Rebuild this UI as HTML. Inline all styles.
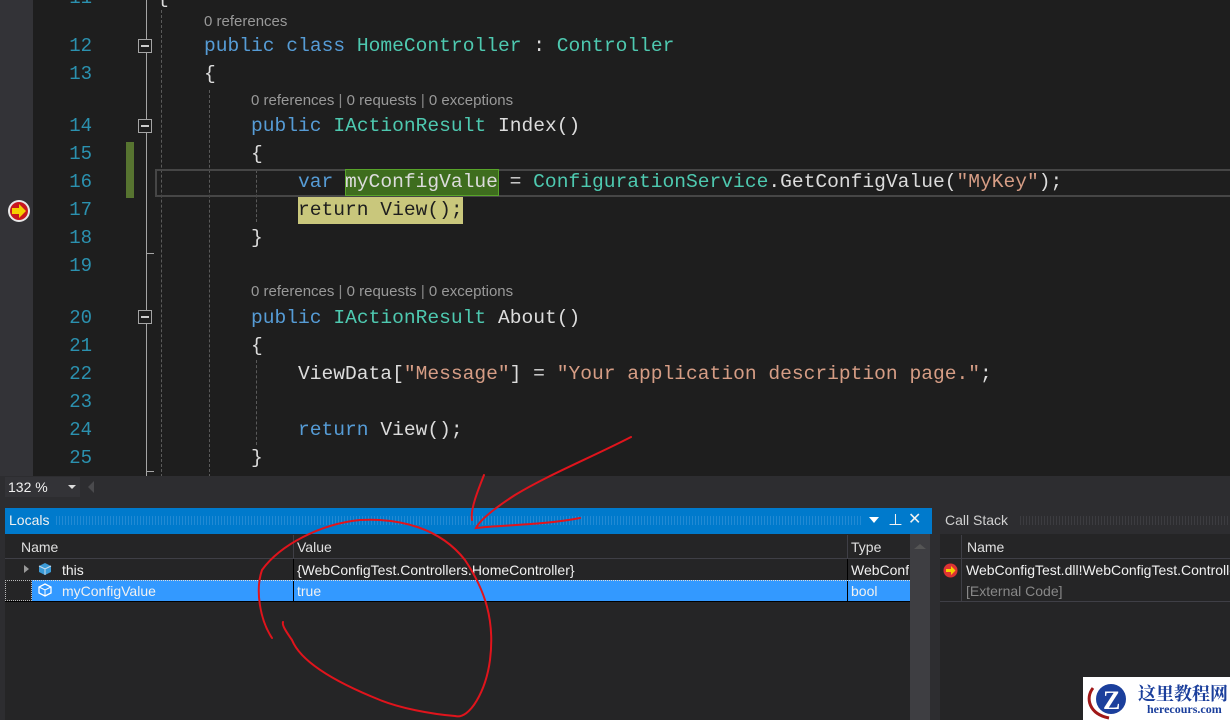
<!DOCTYPE html>
<html><head><meta charset="utf-8"><style>
*{margin:0;padding:0;box-sizing:border-box}
body{width:1230px;height:720px;overflow:hidden;background:#1e1e1e;position:relative;font-family:"Liberation Sans","Noto Sans CJK SC",sans-serif}
.ab{position:absolute}
.code{position:absolute;font-family:"Liberation Mono",monospace;font-size:19.6px;white-space:pre;color:#dcdcdc;line-height:28px}
.ln{position:absolute;left:40px;width:52px;text-align:right;font-family:"Liberation Mono",monospace;font-size:19px;color:#2b91af;line-height:28px}
.cl{position:absolute;font-size:15px;color:#999;white-space:pre;line-height:20px}
.k{color:#569cd6}.t{color:#4ec9b0}.s{color:#d69d85}
.dash{position:absolute;width:0;border-left:1px dashed #5a5a5a}
.box{position:absolute;left:138px;width:14px;height:14px;border:1px solid #a5a5a5;background:#1e1e1e}
.box::after{content:"";position:absolute;left:2px;top:5px;width:8px;height:2px;background:#ccc}
.ui{font-size:14px;color:#f1f1f1;white-space:pre;position:absolute}
</style></head><body>
<!-- left margin -->
<div class="ab" style="left:0;top:0;width:33px;height:477px;background:#333337"></div>
<!-- outline line -->
<div class="ab" style="left:146px;top:0;width:1px;height:477px;background:#a5a5a5"></div>
<div class="ab" style="left:146px;top:253px;width:8px;height:1px;background:#a5a5a5"></div>
<div class="ab" style="left:146px;top:471px;width:8px;height:1px;background:#a5a5a5"></div>
<div class="box" style="top:39px"></div>
<div class="box" style="top:119px"></div>
<div class="box" style="top:310px"></div>
<!-- change markers -->
<div class="ab" style="left:126px;top:142px;width:8px;height:56px;background:#577430"></div>
<!-- guides -->
<div class="dash" style="left:161px;top:10px;height:467px"></div>
<div class="dash" style="left:209px;top:90px;height:387px"></div>
<div class="dash" style="left:256px;top:170px;height:52px"></div>
<div class="dash" style="left:256px;top:360px;height:85px"></div>
<!-- current line box -->
<div class="ab" style="left:155px;top:169px;width:1080px;height:28px;border:2px solid #464646"></div>
<!-- breakpoint arrow -->
<svg class="ab" style="left:7px;top:199px" width="24" height="24"><circle cx="12" cy="12" r="11" fill="#e8e8e8"/><circle cx="12" cy="12" r="9" fill="#c8171e"/><path d="M5 9h7V5l7 7-7 7v-4H5z" fill="#f5d000"/></svg>

<div class="ln" style="top:-16px">11</div>
<div class="code" style="left:157px;top:-16px">{</div>
<div class="cl" style="left:204px;top:12px">0 references</div>
<div class="ln" style="top:32px">12</div>
<div class="code" style="left:204px;top:32px"><span class="k">public class</span> <span class="t">HomeController</span> : <span class="t">Controller</span></div>
<div class="ln" style="top:60px">13</div>
<div class="code" style="left:204px;top:60px">{</div>
<div class="cl" style="left:251px;top:91px">0 references <span style="color:#888">|</span> 0 requests <span style="color:#888">|</span> 0 exceptions</div>
<div class="ln" style="top:112px">14</div>
<div class="code" style="left:251px;top:112px"><span class="k">public</span> <span class="t">IActionResult</span> Index()</div>
<div class="ln" style="top:140px">15</div>
<div class="code" style="left:251px;top:140px">{</div>
<div class="ln" style="top:168px">16</div>
<div class="ab" style="left:345px;top:169px;width:154px;height:27px;background:#3e6d1e;border:1px solid #58a32a"></div>
<div class="code" style="left:298px;top:168px"><span class="k">var</span> myConfigValue = <span class="t">ConfigurationService</span>.GetConfigValue(<span class="s">"MyKey"</span>);</div>
<div class="ln" style="top:196px">17</div>
<div class="ab" style="left:298px;top:197px;width:165px;height:27px;background:#c9c77c"></div>
<div class="code" style="left:298px;top:196px;color:#1e1e1e">return View();</div>
<div class="ln" style="top:224px">18</div>
<div class="code" style="left:251px;top:224px">}</div>
<div class="ln" style="top:252px">19</div>
<div class="cl" style="left:251px;top:282px">0 references <span style="color:#888">|</span> 0 requests <span style="color:#888">|</span> 0 exceptions</div>
<div class="ln" style="top:304px">20</div>
<div class="code" style="left:251px;top:304px"><span class="k">public</span> <span class="t">IActionResult</span> About()</div>
<div class="ln" style="top:332px">21</div>
<div class="code" style="left:251px;top:332px">{</div>
<div class="ln" style="top:360px">22</div>
<div class="code" style="left:298px;top:360px">ViewData[<span class="s">"Message"</span>] = <span class="s">"Your application description page."</span>;</div>
<div class="ln" style="top:388px">23</div>
<div class="ln" style="top:416px">24</div>
<div class="code" style="left:298px;top:416px"><span class="k">return</span> View();</div>
<div class="ln" style="top:444px">25</div>
<div class="code" style="left:251px;top:444px">}</div>

<!-- zoom bar & panel area -->
<div class="ab" style="left:0;top:476px;width:1230px;height:244px;background:#2d2d30"></div>
<div class="ab" style="left:5px;top:477px;width:75px;height:20px;background:#333337"></div>
<div class="ui" style="left:8px;top:479px;font-size:14px">132 %</div>
<div class="ab" style="left:68px;top:485px;border-left:4px solid transparent;border-right:4px solid transparent;border-top:4px solid #ddd"></div>
<div class="ab" style="left:88px;top:481px;border-top:6px solid transparent;border-bottom:6px solid transparent;border-right:6px solid #4a4a4d"></div>

<!-- Locals -->
<div class="ab" style="left:5px;top:508px;width:927px;height:26px;background:#007acc"></div>
<div class="ab" style="left:56px;top:516px;width:805px;height:9px;background:repeating-linear-gradient(90deg,#2a8ed6 0 1px,transparent 1px 3px);opacity:.8"></div>
<div class="ui" style="left:9px;top:512px">Locals</div>
<div class="ab" style="left:869px;top:517px;border-left:5px solid transparent;border-right:5px solid transparent;border-top:6px solid #fff"></div>
<div class="ui" style="left:888px;top:509px;font-size:15px">⊥</div>
<div class="ui" style="left:908px;top:509px;font-size:16px">✕</div>
<div class="ab" style="left:5px;top:534px;width:905px;height:186px;background:#252526"></div>
<div class="ab" style="left:910px;top:534px;width:20px;height:186px;background:#3e3e42"></div>
<div class="ab" style="left:914px;top:544px;border-left:6px solid transparent;border-right:6px solid transparent;border-bottom:5px solid #555"></div>
<div class="ui" style="left:21px;top:539px;color:#e0e0e0">Name</div>
<div class="ui" style="left:297px;top:539px;color:#e0e0e0">Value</div>
<div class="ui" style="left:851px;top:539px;color:#e0e0e0">Type</div>
<div class="ab" style="left:5px;top:558px;width:905px;height:1px;background:#3f3f46"></div>
<div class="ab" style="left:293px;top:535px;width:1px;height:23px;background:#3f3f46"></div>
<div class="ab" style="left:847px;top:535px;width:1px;height:23px;background:#3f3f46"></div>
<div class="ab" style="left:24px;top:565px;border-top:4px solid transparent;border-bottom:4px solid transparent;border-left:5px solid #999"></div>
<svg class="ab" style="left:38px;top:562px" width="14" height="14"><path d="M7 1l6 3v6l-6 3-6-3V4z" fill="#3b9ad6"/><path d="M1 4l6 3 6-3M7 7v6" stroke="#cde" fill="none"/></svg>
<div class="ui" style="left:62px;top:562px">this</div>
<div class="ui" style="left:297px;top:562px">{WebConfigTest.Controllers.HomeController}</div>
<div class="ui" style="left:851px;top:562px;width:58px;overflow:hidden">WebConfigTest</div>
<div class="ab" style="left:293px;top:559px;width:1px;height:42px;background:#000"></div>
<div class="ab" style="left:847px;top:559px;width:1px;height:42px;background:#000"></div>
<div class="ab" style="left:5px;top:580px;width:905px;height:21px;background:#3399ff;border-top:1px dotted #ddd"></div>
<div class="ab" style="left:5px;top:580px;width:27px;height:21px;background:#252526;border:1px dotted #bbb"></div>
<div class="ab" style="left:293px;top:581px;width:1px;height:20px;background:#000"></div>
<div class="ab" style="left:847px;top:581px;width:1px;height:20px;background:#000"></div>
<div class="ab" style="left:5px;top:601px;width:905px;height:1px;background:#000"></div>
<svg class="ab" style="left:38px;top:583px" width="14" height="14"><path d="M7 1l6 3v6l-6 3-6-3V4z" fill="none" stroke="#fff" stroke-width="1.3"/><path d="M1 4l6 3 6-3M7 7v6" stroke="#fff" fill="none"/></svg>
<div class="ui" style="left:62px;top:583px">myConfigValue</div>
<div class="ui" style="left:297px;top:583px">true</div>
<div class="ui" style="left:851px;top:583px">bool</div>

<!-- Call stack -->
<div class="ab" style="left:940px;top:534px;width:290px;height:186px;background:#252526"></div>
<div class="ab" style="left:1020px;top:516px;width:210px;height:9px;background:repeating-linear-gradient(90deg,#3c3c40 0 1px,transparent 1px 3px)"></div>
<div class="ui" style="left:945px;top:512px;color:#d0d0d0">Call Stack</div>
<div class="ui" style="left:967px;top:539px;color:#e0e0e0">Name</div>
<div class="ab" style="left:940px;top:558px;width:290px;height:1px;background:#3f3f46"></div>
<div class="ab" style="left:961px;top:535px;width:1px;height:66px;background:#3f3f46"></div>
<svg class="ab" style="left:943px;top:563px" width="15" height="15"><circle cx="7.5" cy="7.5" r="7" fill="#d33"/><path d="M3 6h5V3l4.5 4.5L8 12V9H3z" fill="#f5d000"/></svg>
<div class="ui" style="left:966px;top:562px">WebConfigTest.dll!WebConfigTest.Controllers</div>
<div class="ui" style="left:966px;top:583px;color:#888">[External Code]</div>
<div class="ab" style="left:940px;top:601px;width:290px;height:1px;background:#3f3f46"></div>

<!-- red annotations -->
<svg class="ab" style="left:0;top:0" width="1230" height="720">
<g fill="none" stroke="#e0141c" stroke-width="2" stroke-linecap="round">
<path d="M631 437C590 458 548 475 515 495C495 508 480 520 476 528C500 525 545 525 580 518"/>
<path d="M484 475C478 490 470 510 472 520"/>
<path d="M272 638C260 620 255 590 262 570C280 545 320 524 360 520C400 518 440 528 465 560C485 590 495 620 490 660C486 690 470 720 455 716C430 714 400 708 380 700C330 680 300 660 292 640C285 630 282 625 283 622"/>
</g></svg>

<!-- watermark -->
<div class="ab" style="left:1083px;top:677px;width:147px;height:43px;background:#fff"></div>
<svg class="ab" style="left:1085px;top:678px" width="50" height="42"><path d="M8 10C0 20 4 36 24 40" stroke="#a01818" stroke-width="3" fill="none"/><circle cx="26" cy="21" r="15" fill="#1b3f9c"/><text x="18" y="31" font-family="Liberation Serif" font-size="26" font-weight="bold" fill="#fff">Z</text></svg>
<div class="ab" style="left:1138px;top:680px;font-family:'Noto Serif CJK SC',serif;font-size:18px;font-weight:bold;color:#1b3f9c;white-space:nowrap">这里教程网</div>
<div class="ab" style="left:1147px;top:702px;font-family:'Liberation Serif',serif;font-size:12px;font-weight:bold;color:#1b3f9c">herecours.com</div>
</body></html>
